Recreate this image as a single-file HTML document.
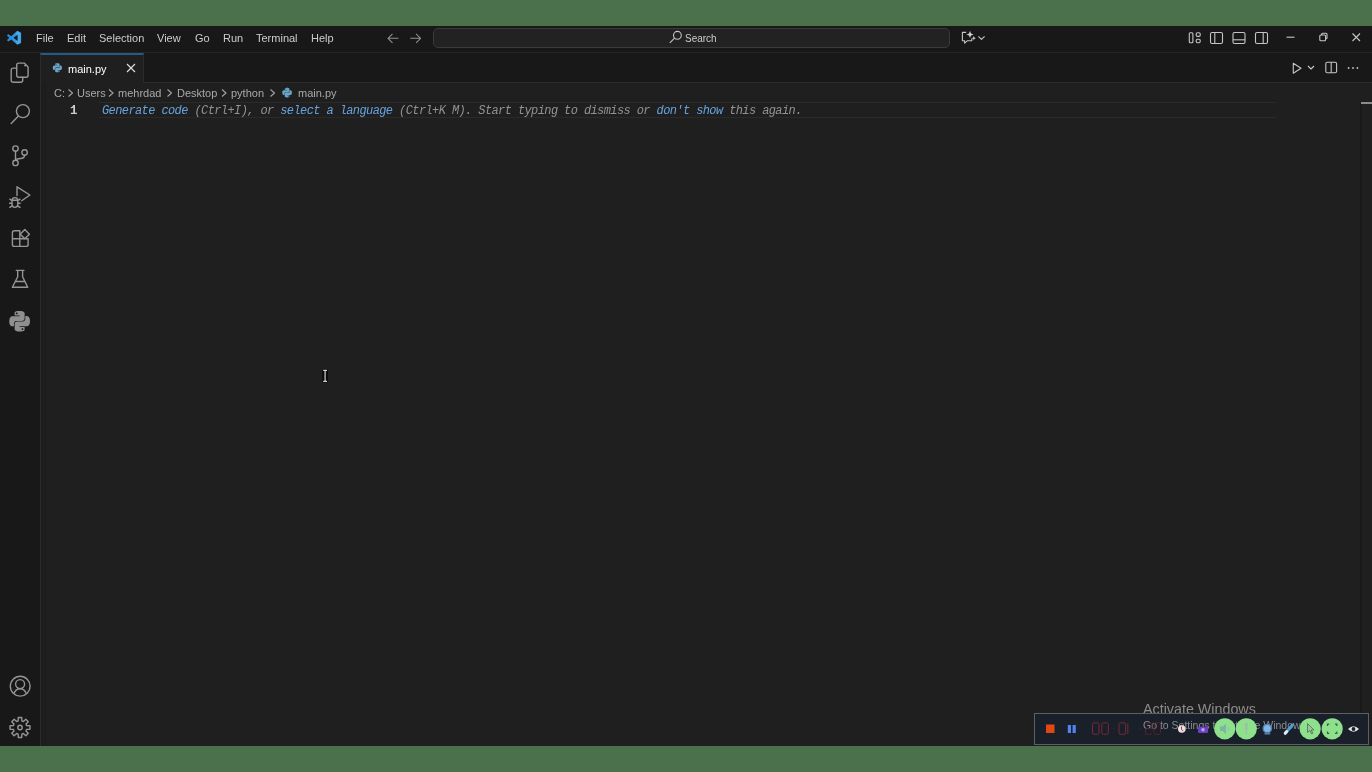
<!DOCTYPE html>
<html><head><meta charset="utf-8">
<style>
*{margin:0;padding:0;box-sizing:border-box}
html,body{width:1372px;height:772px;overflow:hidden;background:#4b714c;font-family:"Liberation Sans",sans-serif}
.a,.menu,.bc,#ghost{will-change:transform}
.a{position:absolute;white-space:pre}
#title{position:absolute;left:0;top:26px;width:1372px;height:27px;background:#181818;border-bottom:1px solid #242424}
.menu{position:absolute;top:25px;height:26px;line-height:26px;font-size:11px;color:#cccccc}
#act{position:absolute;left:0;top:53px;width:41px;height:693px;background:#181818;border-right:1px solid #2b2b2b}
#tabs{position:absolute;left:41px;top:53px;width:1331px;height:30px;background:#181818;border-bottom:1px solid #2b2b2b}
#tab{position:absolute;left:40px;top:53px;width:104px;height:30px;background:#1f1f1f;border-top:2px solid #245a86;border-right:1px solid #2b2b2b;border-left:1px solid #2b2b2b}
#editor{position:absolute;left:41px;top:83px;width:1331px;height:663px;background:#1f1f1f}
#search{position:absolute;left:433px;top:28px;width:517px;height:20px;background:#222222;border:1px solid #3a3a3a;border-radius:5px}
.bc{position:absolute;top:85px;height:16px;line-height:16px;font-size:11px;color:#a9a9a9}
.mono{font-family:"Liberation Mono",monospace;font-style:italic;font-size:12px;letter-spacing:-0.6px}
#ghost{position:absolute;left:101.5px;top:102.5px;height:16px;line-height:16px;color:#929292}
#ghost b{font-weight:normal;color:#66a3de}
#curline{position:absolute;left:99px;top:102px;width:1177px;height:16px;border-top:1px solid #2a2a2a;border-bottom:1px solid #2a2a2a}
#gut{position:absolute;left:41px;top:83px;width:6px;height:663px;background:#1d1d1d}
#ovr{position:absolute;left:1360px;top:102px;width:1.5px;height:644px;background:#191919}
#ovrc{position:absolute;left:1361px;top:102px;width:11px;height:2px;background:#8a8a8a}
svg{position:absolute;left:0;top:0;overflow:visible}
.ai{fill:none;stroke:#959595;stroke-width:1.4;stroke-linecap:round;stroke-linejoin:round}
.ti{fill:none;stroke:#c5c5c5;stroke-width:1.1;stroke-linejoin:round}
</style></head><body>
<div id="title"></div>
<div id="act"></div>
<div id="tabs"></div>
<div id="tab"></div>
<div id="editor"></div>
<div id="search"></div>
<div id="curline"></div>
<div id="ovr"></div><div id="ovrc"></div><div id="gut"></div>

<div class="menu" style="left:36px">File</div>
<div class="menu" style="left:67px">Edit</div>
<div class="menu" style="left:99px">Selection</div>
<div class="menu" style="left:157px">View</div>
<div class="menu" style="left:195px">Go</div>
<div class="menu" style="left:223px">Run</div>
<div class="menu" style="left:256px">Terminal</div>
<div class="menu" style="left:311px">Help</div>
<div class="a" style="left:685.2px;top:32px;font-size:10px;line-height:14px;color:#cccccc">Search</div>

<div class="a" style="left:68.3px;top:61px;font-size:11px;line-height:16px;color:#ffffff">main.py</div>

<div class="bc" style="left:54px">C:</div>
<div class="bc" style="left:77px">Users</div>
<div class="bc" style="left:118px">mehrdad</div>
<div class="bc" style="left:177px">Desktop</div>
<div class="bc" style="left:231px">python</div>
<div class="bc" style="left:298px">main.py</div>

<div class="a" style="left:70px;top:103px;font-family:'Liberation Mono',monospace;font-size:12.5px;font-weight:bold;line-height:16px;color:#cccccc">1</div>
<div id="ghost" class="mono"><b>Generate code</b> (Ctrl+I), or <b>select a language</b> (Ctrl+K M). Start typing to dismiss or <b>don't show</b> this again.</div>

<svg width="1372" height="772" viewBox="0 0 1372 772">
  <!-- vscode logo -->
  <defs><linearGradient id="lg" x1="0" y1="0" x2="1" y2="0"><stop offset="0" stop-color="#2a8ad6"/><stop offset="0.6" stop-color="#2f96e0"/><stop offset="0.75" stop-color="#45aeee"/><stop offset="1" stop-color="#3aa4e8"/></linearGradient></defs>
  <g transform="translate(7.1,31) scale(0.14,0.136)">
    <path fill="url(#lg)" d="M96.46 10.8L75.86.87a6.23 6.23 0 0 0-7.1 1.2L29.35 38.04 12.19 25.01a4.16 4.16 0 0 0-5.32.24L1.36 30.26a4.17 4.17 0 0 0 0 6.16L16.25 50 1.36 63.58a4.17 4.17 0 0 0 0 6.16l5.51 5.01a4.16 4.16 0 0 0 5.32.24l17.16-13.03 39.41 35.96a6.22 6.22 0 0 0 7.1 1.2l20.6-9.92A6.25 6.25 0 0 0 100 83.62V16.38a6.25 6.25 0 0 0-3.54-5.58zM75.02 72.7L45.11 50l29.91-22.7z"/>
  </g>
  <!-- nav arrows -->
  <path class="ti" d="M398.4 38.3H388.2 M392.5 33.8L388 38.3L392.5 42.8" style="stroke:#8e8e8e"/>
  <path class="ti" d="M410.2 38.3H420.4 M416.1 33.8L420.6 38.3L416.1 42.8" style="stroke:#8e8e8e"/>
  <!-- search icon -->
  <circle class="ti" cx="677.4" cy="35.3" r="3.9"/>
  <path class="ti" d="M674.6 38.1L669.8 42.9"/>
  <!-- copilot chat -->
  <path class="ti" d="M966.2 32.4H962.4V40.8H964.6V43.2L967.2 40.8H971.8V38.6"/>
  <path fill="#d0d0d0" d="M970 30.8 L971 33.4 L973.6 34.4 L971 35.4 L970 38 L969 35.4 L966.4 34.4 L969 33.4Z M973.8 36 L974.4 37.6 L976 38.2 L974.4 38.8 L973.8 40.4 L973.2 38.8 L971.6 38.2 L973.2 37.6Z"/>
  <path class="ti" d="M978.4 36.3L981.5 39.4L984.6 36.3"/>
  <!-- layout icons -->
  <rect class="ti" x="1189.3" y="32.8" width="3.6" height="10" rx="1"/>
  <rect class="ti" x="1196.2" y="32.8" width="4" height="3.6" rx="1.2"/>
  <rect class="ti" x="1196.2" y="39.2" width="4" height="3.6" rx="1.2"/>
  <rect class="ti" x="1210.5" y="32.5" width="12" height="11" rx="1.5"/>
  <path class="ti" d="M1214.8 32.5V43.5"/>
  <rect class="ti" x="1233" y="32.5" width="12" height="11" rx="1.5"/>
  <path class="ti" d="M1233 39.8H1245"/>
  <rect class="ti" x="1255.5" y="32.5" width="12" height="11" rx="1.5"/>
  <path class="ti" d="M1263.2 32.5V43.5"/>
  <!-- window controls -->
  <path class="ti" d="M1286.5 37.2H1294.5"/>
  <rect class="ti" x="1319.8" y="35" width="5.8" height="5.8" rx="1"/>
  <path class="ti" d="M1321.6 35V34.3Q1321.6 33.3 1322.6 33.3H1326Q1327 33.3 1327 34.3V37.7Q1327 38.7 1326 38.7H1325.6"/>
  <path class="ti" d="M1352.5 33.5L1360 41 M1360 33.5L1352.5 41"/>
  <!-- tab python icon -->
  <g transform="translate(52.8,63.2) scale(0.38)"><path id="py2" fill="#6aa5c8" d="M14.25.18l.9.2.73.26.59.3.45.32.34.34.25.34.16.33.1.3.04.26.02.2-.01.13V8.5l-.05.63-.13.55-.21.46-.26.38-.3.31-.33.25-.35.19-.35.14-.33.1-.3.07-.26.04-.21.02H8.77l-.69.05-.59.14-.5.22-.41.27-.33.32-.27.35-.2.36-.15.37-.1.35-.07.32-.04.27-.02.21v3.06H3.17l-.21-.03-.28-.07-.32-.12-.35-.18-.36-.26-.36-.36-.35-.46-.32-.59-.28-.73-.21-.88-.14-1.05-.05-1.23.06-1.22.16-1.04.24-.87.32-.71.36-.57.4-.44.42-.33.42-.24.4-.16.36-.1.32-.05.24-.01h.16l.06.01h8.16v-.83H6.18l-.01-2.75-.02-.37.05-.34.11-.31.17-.28.25-.26.31-.23.38-.2.44-.18.51-.15.58-.12.64-.1.71-.06.77-.04.84-.02 1.27.05zm-6.3 1.98l-.23.33-.08.41.08.41.23.34.33.22.41.09.41-.09.33-.22.23-.34.08-.41-.08-.41-.23-.33-.33-.22-.41-.09-.41.09zm13.09 3.95l.28.06.32.12.35.18.36.27.36.35.35.47.32.59.28.73.21.88.14 1.040.05 1.23-.06 1.23-.16 1.04-.24.86-.32.71-.36.57-.4.45-.42.33-.42.24-.4.16-.36.09-.32.05-.24.02-.16-.01h-8.22v.82h5.84l.01 2.76.02.36-.05.34-.11.31-.17.29-.25.25-.31.24-.38.2-.44.17-.51.15-.58.13-.64.09-.71.07-.77.04-.84.01-1.27-.04-1.07-.14-.9-.2-.73-.25-.59-.3-.45-.33-.34-.34-.25-.34-.16-.33-.1-.3-.04-.25-.02-.2.01-.13v-5.34l.05-.64.13-.54.21-.46.26-.38.3-.32.33-.24.35-.2.35-.14.33-.1.3-.06.26-.04.21-.02.13-.01h5.84l.69-.05.59-.14.5-.21.41-.28.33-.32.27-.35.2-.36.15-.36.1-.35.07-.32.04-.28.02-.21V6.07h2.09l.14.01zm-6.47 14.25l-.23.33-.08.41.08.41.23.33.33.23.41.08.41-.08.33-.23.23-.33.08-.41-.08-.41-.23-.33-.33-.23-.41-.08-.41.08z"/></g>
  <!-- tab close -->
  <path class="ti" d="M127 64L135 72 M135 64L127 72" style="stroke:#e0e0e0"/>
  <!-- editor actions -->
  <path class="ti" d="M1293.3 63.3V73.3L1301 68.3Z"/>
  <path class="ti" d="M1308 66L1311 69L1314 66"/>
  <rect class="ti" x="1325.8" y="62.2" width="10.8" height="10.5" rx="1.5"/>
  <path class="ti" d="M1331.2 62.2V72.7"/>
  <circle cx="1348.6" cy="68" r="0.9" fill="#c5c5c5"/><circle cx="1353" cy="68" r="0.9" fill="#c5c5c5"/><circle cx="1357.4" cy="68" r="0.9" fill="#c5c5c5"/>
  <!-- breadcrumb chevrons -->
  <path class="ti" d="M68.5 89.5L72.5 93L68.5 96.5 M109 89.5L113 93L109 96.5 M167.5 89.5L171.5 93L167.5 96.5 M222 89.5L226 93L222 96.5 M270.5 89.5L274.5 93L270.5 96.5" style="stroke:#a0a0a0"/>
  <g transform="translate(282.3,87.8) scale(0.4)"><path fill="#6aa5c8" d="M14.25.18l.9.2.73.26.59.3.45.32.34.34.25.34.16.33.1.3.04.26.02.2-.01.13V8.5l-.05.63-.13.55-.21.46-.26.38-.3.31-.33.25-.35.19-.35.14-.33.1-.3.07-.26.04-.21.02H8.77l-.69.05-.59.14-.5.22-.41.27-.33.32-.27.35-.2.36-.15.37-.1.35-.07.32-.04.27-.02.21v3.06H3.17l-.21-.03-.28-.07-.32-.12-.35-.18-.36-.26-.36-.36-.35-.46-.32-.59-.28-.73-.21-.88-.14-1.05-.05-1.23.06-1.22.16-1.04.24-.87.32-.71.36-.57.4-.44.42-.33.42-.24.4-.16.36-.1.32-.05.24-.01h.16l.06.01h8.16v-.83H6.18l-.01-2.75-.02-.37.05-.34.11-.31.17-.28.25-.26.31-.23.38-.2.44-.18.51-.15.58-.12.64-.1.71-.06.77-.04.84-.02 1.27.05zm-6.3 1.98l-.23.33-.08.41.08.41.23.34.33.22.41.09.41-.09.33-.22.23-.34.08-.41-.08-.41-.23-.33-.33-.22-.41-.09-.41.09zm13.09 3.95l.28.06.32.12.35.18.36.27.36.35.35.47.32.59.28.73.21.88.14 1.040.05 1.23-.06 1.23-.16 1.04-.24.86-.32.71-.36.57-.4.45-.42.33-.42.24-.4.16-.36.09-.32.05-.24.02-.16-.01h-8.22v.82h5.84l.01 2.76.02.36-.05.34-.11.31-.17.29-.25.25-.31.24-.38.2-.44.17-.51.15-.58.13-.64.09-.71.07-.77.04-.84.01-1.27-.04-1.07-.14-.9-.2-.73-.25-.59-.3-.45-.33-.34-.34-.25-.34-.16-.33-.1-.3-.04-.25-.02-.2.01-.13v-5.34l.05-.64.13-.54.21-.46.26-.38.3-.32.33-.24.35-.2.35-.14.33-.1.3-.06.26-.04.21-.02.13-.01h5.84l.69-.05.59-.14.5-.21.41-.28.33-.32.27-.35.2-.36.15-.36.1-.35.07-.32.04-.28.02-.21V6.07h2.09l.14.01zm-6.47 14.25l-.23.33-.08.41.08.41.23.33.33.23.41.08.41-.08.33-.23.23-.33.08-.41-.08-.41-.23-.33-.33-.23-.41-.08-.41.08z"/></g>

  <!-- activity bar icons -->
  <path class="ai" d="M16.7 67.5V65.1Q16.7 63.1 18.7 63.1H24.3L28.1 66.9V75.2Q28.1 77.2 26.1 77.2H18.7Q16.7 77.2 16.7 75.2Z"/>
  <circle cx="25.1" cy="65.6" r="1" fill="#959595"/>
  <path class="ai" d="M16.7 68.1H13.2Q11.2 68.1 11.2 70.1V80.3Q11.2 82.3 13.2 82.3H20.7Q22.7 82.3 22.7 80.3V77.2"/>
  <circle class="ai" cx="22.9" cy="111.1" r="6.5"/>
  <path class="ai" d="M18.2 116.2L11.2 123.5"/>
  <circle class="ai" cx="15.5" cy="148.6" r="2.7"/>
  <circle class="ai" cx="24.6" cy="152.4" r="2.7"/>
  <circle class="ai" cx="15.5" cy="162.9" r="2.7"/>
  <path class="ai" d="M15.5 151.3V160.2 M24.6 155.1Q24.4 158.3 20.5 158.5Q16.2 158.7 15.6 160.3"/>
  <path class="ai" d="M17 195.5V186.8L29.9 195L21.7 200.8"/>
  <path class="ai" d="M12.2 199.8Q12.2 197.6 14.9 197.6Q17.6 197.6 17.6 199.8 M12 200.3H17.8V204.3Q17.8 207.4 14.9 207.4Q12 207.4 12 204.3Z M9.8 199.2L12 200.6 M20 199.2L17.8 200.6 M9.6 203.3H12 M17.8 203.3H20.2 M9.8 207.3L12.2 205.8 M20 207.3L17.6 205.8"/>
  <path class="ai" d="M12.4 238.8V232.8Q12.4 230.8 14.4 230.8H19.8V246.4H14.4Q12.4 246.4 12.4 244.4V238.8H19.8 M19.8 238.8H28.1V244.4Q28.1 246.4 26.1 246.4H19.8"/>
  <path class="ai" d="M24.8 229.6L29.4 234.2L24.8 238.8L20.2 234.2Z"/>
  <path class="ai" d="M16.3 270.4H23.9 M17.7 270.4V276.8L12.4 287.3H27.7L22.6 276.8V270.4 M15.2 281.5H25.1"/>
  <g transform="translate(9.3,310.9) scale(0.86)"><path id="py" fill="#8f8f8f" d="M14.25.18l.9.2.73.26.59.3.45.32.34.34.25.34.16.33.1.3.04.26.02.2-.01.13V8.5l-.05.63-.13.55-.21.46-.26.38-.3.31-.33.25-.35.19-.35.14-.33.1-.3.07-.26.04-.21.02H8.77l-.69.05-.59.14-.5.22-.41.27-.33.32-.27.35-.2.36-.15.37-.1.35-.07.32-.04.27-.02.21v3.06H3.17l-.21-.03-.28-.07-.32-.12-.35-.18-.36-.26-.36-.36-.35-.46-.32-.59-.28-.73-.21-.88-.14-1.050-.05-1.23.06-1.22.16-1.04.24-.87.32-.71.36-.57.4-.44.42-.33.42-.24.4-.16.36-.1.32-.05.24-.01h.16l.06.01h8.16v-.83H6.18l-.01-2.75-.02-.37.05-.34.11-.31.17-.28.25-.26.31-.23.38-.2.44-.18.51-.15.58-.12.64-.1.71-.06.77-.04.84-.02 1.27.05zm-6.3 1.98l-.23.33-.08.41.08.41.23.34.33.22.41.09.41-.09.33-.22.23-.34.08-.41-.08-.41-.23-.33-.33-.22-.41-.09-.41.09zm13.09 3.95l.28.06.32.12.35.18.36.27.36.35.35.47.32.59.28.73.21.88.14 1.04.05 1.23-.06 1.23-.16 1.04-.24.86-.32.71-.36.57-.4.45-.42.33-.42.24-.4.16-.36.09-.32.05-.24.02-.16-.01h-8.22v.82h5.84l.01 2.76.02.36-.05.34-.11.31-.17.29-.25.25-.31.24-.38.2-.44.17-.51.15-.58.13-.64.09-.71.07-.77.04-.84.01-1.27-.04-1.07-.14-.9-.2-.73-.25-.59-.3-.45-.33-.34-.34-.25-.34-.16-.33-.1-.3-.04-.25-.02-.2.01-.13v-5.34l.05-.64.13-.54.21-.46.26-.38.3-.32.33-.24.35-.2.35-.14.33-.1.3-.06.26-.04.21-.02.13-.01h5.84l.69-.05.59-.14.5-.21.41-.28.33-.32.27-.35.2-.36.15-.36.1-.35.07-.32.04-.28.02-.21V6.07h2.09l.14.01zm-6.47 14.25l-.23.33-.08.41.08.41.23.33.33.23.41.08.41-.08.33-.23.23-.33.08-.41-.08-.41-.23-.33-.33-.23-.41-.08-.41.08z"/></g>
  <circle class="ai" cx="20.2" cy="686.2" r="9.9"/>
  <circle class="ai" cx="20.1" cy="684.1" r="4.5"/>
  <path class="ai" d="M13.9 693.4Q15.8 688.7 20.1 688.7Q24.4 688.7 26.3 693.4"/>
  <circle class="ai" cx="20" cy="727.5" r="2.2"/>
  <path class="ai" d="M18.16 720.85L18.29 717.55L21.71 717.55L21.84 720.85L23.40 721.50L25.83 719.25L28.25 721.67L26.00 724.10L26.65 725.66L29.95 725.79L29.95 729.21L26.65 729.34L26.00 730.90L28.25 733.33L25.83 735.75L23.40 733.50L21.84 734.15L21.71 737.45L18.29 737.45L18.16 734.15L16.60 733.50L14.17 735.75L11.75 733.33L14.00 730.90L13.35 729.34L10.05 729.21L10.05 725.79L13.35 725.66L14.00 724.10L11.75 721.67L14.17 719.25L16.60 721.50Z"/>
  <!-- cursor I-beam -->
  <rect x="322.3" y="369" width="5.6" height="13.6" rx="1" fill="#0a0a0a"/>
  <path d="M323.2 370.3H327 M325.1 370.3V381.3 M323.2 381.3H327" stroke="#d0d0d0" stroke-width="1.2" fill="none"/>
</svg>


<div class="a" style="left:1142.7px;top:700.8px;font-size:14.3px;line-height:16px;color:#8c8c8c">Activate Windows</div>
<div id="rec" style="position:absolute;left:1034px;top:713px;width:335px;height:32px;background:#19202a;border:1px solid #5c5f63"></div>
<div class="a" style="left:1142.7px;top:718.3px;font-size:10.5px;line-height:14px;color:#8a8b8e">Go to Settings to activate Windows.</div>
<svg width="1372" height="772" viewBox="0 0 1372 772">
  <rect x="1046" y="724.5" width="8.5" height="8.5" fill="#e4470f"/>
  <rect x="1067.8" y="725" width="3.2" height="8" fill="#5382ee"/>
  <rect x="1072.6" y="725" width="3.2" height="8" fill="#5382ee"/>
  <g fill="none" stroke-width="1"><path d="M1094.0 722.8H1097.5Q1099.0 722.8 1099.0 724.3V732.8Q1099.0 734.3 1097.5 734.3H1094.0Q1092.5 734.3 1092.5 732.8V724.3Q1092.5 722.8 1094.0 722.8ZM1103.3 722.8H1106.8Q1108.3 722.8 1108.3 724.3V732.8Q1108.3 734.3 1106.8 734.3H1103.3Q1101.8 734.3 1101.8 732.8V724.3Q1101.8 722.8 1103.3 722.8Z" stroke="#78283a"/><path d="M1120.5 722.8H1124Q1125.5 722.8 1125.5 724.3V732.8Q1125.5 734.3 1124 734.3H1120.5Q1119 734.3 1119 732.8V724.3Q1119 722.8 1120.5 722.8ZM1127.8 723.3V734.0" stroke="#78283a"/><path d="M1145.5 723.10H1151.0Q1152.0 723.10 1152.0 724.3V727.8Q1152.0 728.60 1151.0 728.60H1146.5Q1145.5 728.60 1145.5 729.8V734.10H1152.0M1155.5 722.8H1159Q1160.5 722.8 1160.5 724.3V732.8Q1160.5 734.3 1159 734.3H1155.5Q1154 734.3 1154 732.8V724.3Q1154 722.8 1155.5 722.8Z" stroke="#55212f"/><circle cx="1113.8" cy="728.5" r="0.6" fill="#4a2a35" stroke="none"/><circle cx="1140.3" cy="728.5" r="0.6" fill="#4a2a35" stroke="none"/></g>
  <circle cx="1181.8" cy="729" r="3.8" fill="#f0dede"/>
  <path d="M1181.5 726.5V729.3L1183.2 731" stroke="#7a3030" stroke-width="0.9" fill="none"/>
  <rect x="1198" y="726.5" width="10" height="6.5" rx="1" fill="#6a3fc0"/>
  <circle cx="1203" cy="729.7" r="1.8" fill="#b9a0f0"/>
  <circle cx="1224.8" cy="728.8" r="10.6" fill="#8fe08d"/>
  <circle cx="1246.3" cy="728.8" r="10.6" fill="#8fe08d"/>
  <path d="M1220 726.5H1222.5L1226 723.5V734L1222.5 731H1220Z" fill="#7ab6a0"/>
  <path d="M1228 726.5Q1229.5 728.8 1228 731" stroke="#8cc0b0" stroke-width="1" fill="none"/>
  <rect x="1244.8" y="722.5" width="3" height="7.5" rx="1.5" fill="#9cc0a8"/>
  <path d="M1246.3 730V735" stroke="#9cc0a8" stroke-width="1"/>
  <circle cx="1267.3" cy="728.5" r="4.2" fill="#7fb6e6" stroke="#4f7fae" stroke-width="1.3"/>
  <path d="M1264.5 733.8H1270.2" stroke="#5a86b4" stroke-width="1.4"/>
  <path d="M1285.5 733L1292.5 725" stroke="#4b9ed0" stroke-width="3" stroke-linecap="round"/>
  <path d="M1285.2 733.3L1286.8 731.5" stroke="#e8e8e8" stroke-width="3" stroke-linecap="round"/>
  <circle cx="1310.2" cy="728.8" r="10.6" fill="#8fe08d"/>
  <circle cx="1332.2" cy="728.8" r="10.6" fill="#8fe08d"/>
  <path d="M1307.5 723.5V732.5L1309.8 730.5L1311.5 734L1312.8 733.3L1311.2 730H1314Z" fill="#9cc59a" stroke="#4f7050" stroke-width="0.8"/>
  <path d="M1327.5 726V724.2H1329.3 M1335 724.2H1336.8V726 M1336.8 731.6V733.4H1335 M1329.3 733.4H1327.5V731.6" stroke="#2f6a34" stroke-width="1.2" fill="none"/>
  <path d="M1348 729Q1353.5 723.5 1359 729Q1353.5 734.5 1348 729Z" fill="#e6e6e6"/>
  <circle cx="1353.5" cy="729" r="1.9" fill="#19202a"/>
</svg>

</body></html>
